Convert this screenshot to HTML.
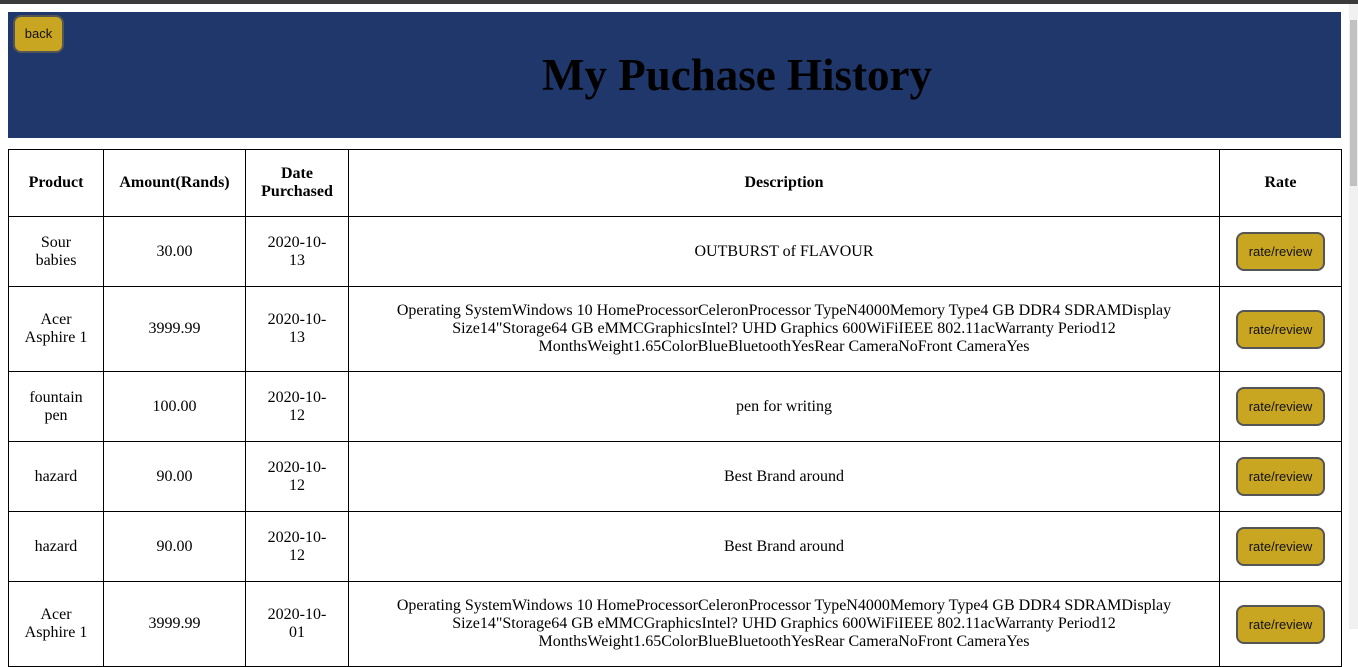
<!DOCTYPE html>
<html><head><style>
html,body{margin:0;padding:0;background:#fff;width:1358px;height:629px;overflow:hidden;font-family:"Liberation Serif",serif;}
.topbar{position:absolute;left:0;top:0;width:1358px;height:4px;background:#3b3b3b;}
.sb{position:absolute;left:1349px;top:4px;width:9px;height:625px;background:#f1f1f1;}
.sb .th{position:absolute;left:1px;top:16px;width:7px;height:166px;background:#c1c1c1;}
.hdr{position:absolute;left:8px;top:12px;width:1333px;height:126px;background:#1f376b;}
.hdr h1{position:absolute;left:0;width:1458px;top:38px;margin:0;text-align:center;font-size:45px;font-weight:bold;line-height:50px;color:#000;}
.btn{position:absolute;box-sizing:border-box;background:#c9a621;border:2px solid #555;border-radius:8px;font-family:"Liberation Sans",sans-serif;font-size:13px;color:#111;text-align:center;}
.back{left:13px;top:15px;width:51px;height:38px;line-height:34px;}
table{position:absolute;left:8px;top:149px;border-collapse:collapse;table-layout:fixed;width:1333px;}
td,th{border:1px solid #000;text-align:center;font-size:16px;line-height:18px;padding:0;}
th{font-weight:bold;font-size:16px;}
.desc{white-space:nowrap;}
.rb{position:relative;display:inline-block;width:89px;height:39px;line-height:35px;}
</style></head><body>
<div class="topbar"></div>
<div class="hdr"><h1>My Puchase History</h1></div>
<div class="btn back">back</div>
<table>
<colgroup><col style="width:95px"><col style="width:142px"><col style="width:103px"><col style="width:871px"><col style="width:122px"></colgroup>
<tr style="height:67px"><th>Product</th><th>Amount(Rands)</th><th>Date<br>Purchased</th><th>Description</th><th>Rate</th></tr>
<tr style="height:70px"><td>Sour<br>babies</td><td>30.00</td><td>2020-10-<br>13</td><td class="desc">OUTBURST of FLAVOUR</td><td><span class="btn rb">rate/review</span></td></tr>
<tr style="height:85px"><td>Acer<br>Asphire 1</td><td>3999.99</td><td>2020-10-<br>13</td><td class="desc">Operating SystemWindows 10 HomeProcessorCeleronProcessor TypeN4000Memory Type4 GB DDR4 SDRAMDisplay<br>Size14"Storage64 GB eMMCGraphicsIntel? UHD Graphics 600WiFiIEEE 802.11acWarranty Period12<br>MonthsWeight1.65ColorBlueBluetoothYesRear CameraNoFront CameraYes</td><td><span class="btn rb">rate/review</span></td></tr>
<tr style="height:70px"><td>fountain<br>pen</td><td>100.00</td><td>2020-10-<br>12</td><td class="desc">pen for writing</td><td><span class="btn rb">rate/review</span></td></tr>
<tr style="height:70px"><td>hazard</td><td>90.00</td><td>2020-10-<br>12</td><td class="desc">Best Brand around</td><td><span class="btn rb">rate/review</span></td></tr>
<tr style="height:70px"><td>hazard</td><td>90.00</td><td>2020-10-<br>12</td><td class="desc">Best Brand around</td><td><span class="btn rb">rate/review</span></td></tr>
<tr style="height:85px"><td>Acer<br>Asphire 1</td><td>3999.99</td><td>2020-10-<br>01</td><td class="desc">Operating SystemWindows 10 HomeProcessorCeleronProcessor TypeN4000Memory Type4 GB DDR4 SDRAMDisplay<br>Size14"Storage64 GB eMMCGraphicsIntel? UHD Graphics 600WiFiIEEE 802.11acWarranty Period12<br>MonthsWeight1.65ColorBlueBluetoothYesRear CameraNoFront CameraYes</td><td><span class="btn rb">rate/review</span></td></tr>
</table>
<div class="sb"><div class="th"></div></div>
</body></html>
